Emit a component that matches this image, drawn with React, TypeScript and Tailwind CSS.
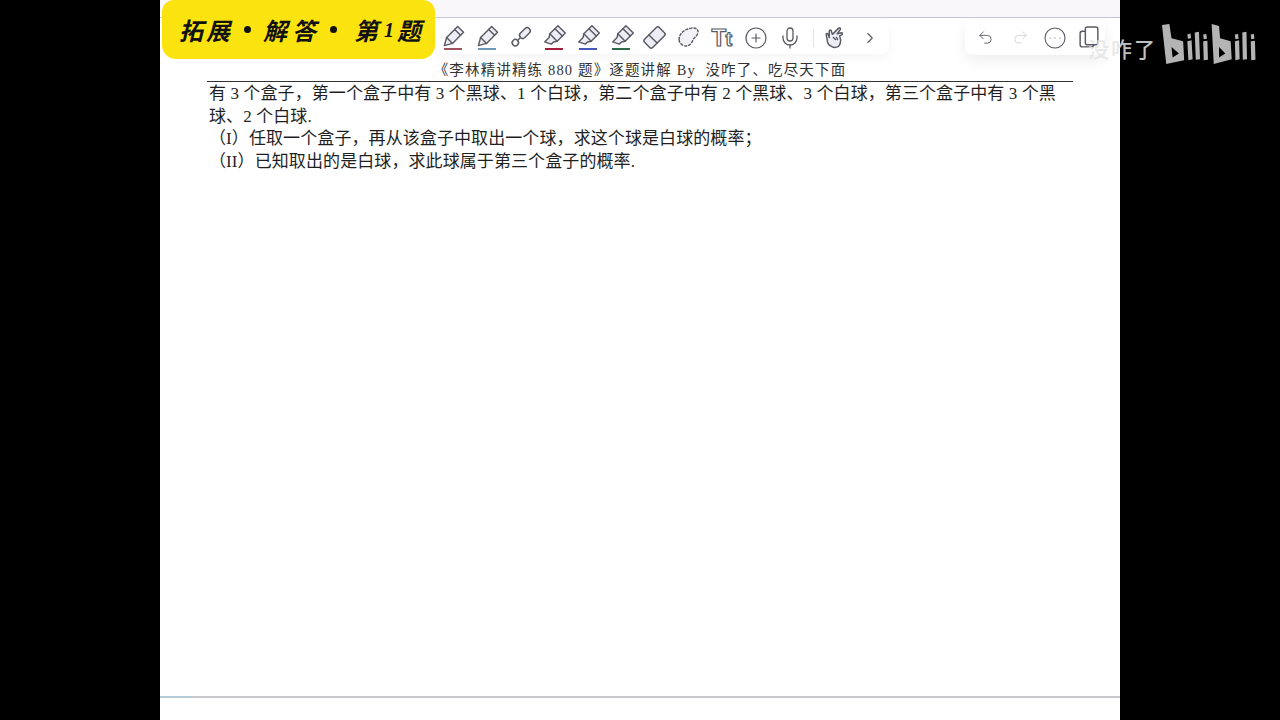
import { ChevronRight, CircleEllipsis, CirclePlus, Mic, Redo2, Undo2 } from "lucide-react";

const S = "#5a5a64";
const F = "#ededf5";

function Svg({ children }: { children: React.ReactNode }) {
  return (
    <svg width="25" height="25" viewBox="0 0 24 24" fill="none" stroke={S} strokeWidth="1.4" strokeLinejoin="round" strokeLinecap="round">
      {children}
    </svg>
  );
}

const Pencil = () => (
  <Svg>
    <g transform="rotate(45 12 12)">
      <path d="M8 1h8v15l-4 7-4-7z" fill={F} />
      <path d="M8 5h8M8 16h8" />
    </g>
  </Svg>
);
const Link = () => (
  <Svg>
    <g transform="rotate(45 12 12)">
      <rect x="9" y="0" width="6" height="12" rx="3" fill={F} />
      <path d="M12 12v4" />
      <circle cx="12" cy="19" r="3" />
    </g>
  </Svg>
);
const Marker = () => (
  <Svg>
    <g transform="rotate(45 12 12)">
      <path d="M7 1h10v11l-2 3v3l-6 3v-6l-2-3z" fill={F} />
      <path d="M7 5h10M7 12h10" />
    </g>
  </Svg>
);
const Eraser = () => (
  <Svg>
    <g transform="rotate(45 12 12)">
      <rect x="6.500" y="2" width="11" height="20" rx="2" fill={F} />
      <path d="M6.500 14h11" />
    </g>
  </Svg>
);
const Lasso = () => (
  <Svg>
    <path d="M3 14c0-6 5-10 12-11 4-.5 7 1 6 5-1 3-4 4-5 7-1 3-4 6-8 5-3-1-5-3-5-6z" fill="#f3f3f7" strokeDasharray="2 2" />
  </Svg>
);
const Tt = () => (
  <svg width="30" height="26" viewBox="0 0 30 26">
    <text x="4.500" y="21" fontFamily="'Liberation Sans', sans-serif" fontWeight="700" fontSize="24" fill="#fff" stroke={S} strokeWidth="1.2">T</text>
    <text x="18.500" y="21" fontFamily="'Liberation Sans', sans-serif" fontWeight="700" fontSize="20" fill="#fff" stroke={S} strokeWidth="1.2">t</text>
  </svg>
);
const HandIcon = () => (
  <Svg>
    <path d="M9 21c-3-1-5-4-5-7l-1-5c0-1 1.500-1 2 0l1 3 0-6c0-1.500 2-1.500 2 0l1 3 6-6c1-1 2.500.500 1.500 1.500l-3 4 4-1c1.500 0 1.500 1.500.500 2l-2 1 1 4c0 3-1 5-2 6-2 1-4 1.500-6 .5z" fill={F} />
    <path d="M10 12l2 2M13 12l1 2" />
  </Svg>
);
const Devices = () => (
  <Svg>
    <rect x="8" y="2" width="12" height="17" rx="2" />
    <path d="M8 6H5a2 2 0 0 0-2 2v11a2 2 0 0 0 2 2h9a2 2 0 0 0 2-2" />
  </Svg>
);

function Tool({ children, line }: { children: React.ReactNode; line?: string }) {
  return (
    <div className="relative flex h-full w-[33.7px] shrink-0 items-center justify-center">
      {children}
      {line ? <span className={`absolute left-[8px] top-[26.5px] h-[2px] w-[18px] ${line}`} /> : null}
    </div>
  );
}

function Logo() {
  return (
    <svg width="94" height="42" viewBox="0 0 89 44" preserveAspectRatio="none" fill="#b4b4b4" aria-label="bilibili">
      <path fillRule="evenodd" d="M0 1l7-1 2 15 11 3 1 20-17 4zM9 24l1 11 6-4z" />
      <path d="M24 18l4-1 1 20-4 1zM24 11l3-1 .5 5-3 .5zM31 9l4-1 1 29-4 .5zM39 18l4-.500.5 20-4 .5zM39 11l3-.5.5 5-3 .5z" />
      <path fillRule="evenodd" d="M47 0l7 2 1 13 10 3 1 19-17 5zM54 24v11l6-4z" />
      <path d="M69 18l4-1 .5 20-4 1zM69 11l3-.5.5 5-3 .5zM76 9l4-1 .5 29-4 .5zM84 18l4-.5.5 20-4 .5zM84 11l3-.5.5 5-3 .5z" />
    </svg>
  );
}

export default function App() {
  const serif = "font-['Liberation_Serif','Noto_Sans_CJK_SC',serif]";
  return (
    <div className="relative flex h-[720px] w-[1280px] justify-center overflow-hidden bg-black">
      <main className={`relative flex h-full w-[960px] flex-col bg-white text-[#222] ${serif}`}>
        <div className="h-[18px] shrink-0 border-b border-[#c8c8dc] bg-[#f9f7fa]" />
        <header className="mx-[47px] mt-[44px] h-[20px] shrink-0 border-b border-[#333] text-center text-[14.500px] leading-[16px] tracking-[1.15px] text-[#333]">
          《李林精讲精练 880 题》逐题讲解 By&nbsp; 没咋了、吃尽天下面
        </header>
        <section className="ml-[49px] mt-px flex-1 text-[17px] leading-[22.700px] tracking-[0.09px] text-[#1f1f1f]">
          <p>有 3 个盒子，第一个盒子中有 3 个黑球、1 个白球，第二个盒子中有 2 个黑球、3 个白球，第三个盒子中有 3 个黑</p>
          <p>球、2 个白球.</p>
          <p>（I）任取一个盒子，再从该盒子中取出一个球，求这个球是白球的概率；</p>
          <p>（II）已知取出的是白球，求此球属于第三个盒子的概率.</p>
        </section>
        <div className="mb-[22px] flex h-[2px] shrink-0 bg-[#c8c8cc]">
          <div className="h-full w-[32px] bg-[#b6cbd8]" />
        </div>

        <div className="absolute left-[2px] top-0 flex h-[59px] w-[273px] items-center rounded-b-[14px] rounded-t-[12px] bg-[#fbe30f] pl-[17px] font-['Noto_Sans_CJK_SC',sans-serif] text-[24px] font-bold italic leading-none text-[#111]">
          <span className="w-[27px]">拓</span>
          <span className="w-[27px]">展</span>
          <span className="ml-[11px] h-[7px] w-[7px] rounded-full bg-[#111]" />
          <span className="ml-[12px] w-[29px]">解</span>
          <span className="w-[27px]">答</span>
          <span className="ml-[11px] h-[7px] w-[7px] rounded-full bg-[#111]" />
          <span className="ml-[17px] w-[30px]">第</span>
          <span className="w-[13px] font-['Liberation_Serif',serif] text-[20px]">1</span>
          <span>题</span>
        </div>

        <nav className="absolute left-[276px] top-[21px] flex h-[33px] w-[453px] items-center rounded-lg bg-white shadow-[0_4px_10px_rgba(0,0,0,0.04)]">
          <Tool line="bg-[#a0525e]"><Pencil /></Tool>
          <Tool line="bg-[#6e97b8]"><Pencil /></Tool>
          <Tool><Link /></Tool>
          <Tool line="bg-[#a31f3c]"><Marker /></Tool>
          <Tool line="bg-[#4557b8]"><Marker /></Tool>
          <Tool line="bg-[#2f6b4a]"><Marker /></Tool>
          <Tool><Eraser /></Tool>
          <Tool><Lasso /></Tool>
          <Tool><Tt /></Tool>
          <Tool><CirclePlus size={24} strokeWidth={1.2} color={S} /></Tool>
          <Tool><Mic size={24} strokeWidth={1.3} color={S} /></Tool>
          <span className="ml-[6px] h-[18px] w-px bg-[#e2e2e6]" />
          <div className="ml-[5px]"><Tool><HandIcon /></Tool></div>
          <div className="ml-[1px]"><Tool><ChevronRight size={18} strokeWidth={1.5} color={S} /></Tool></div>
        </nav>

        <nav className="absolute left-[805px] top-[20px] flex h-[35px] w-[140px] items-center gap-px rounded-lg bg-white pl-[3.5px] shadow-[0_6px_14px_rgba(0,0,0,0.07)]">
          <Tool><Undo2 size={17} strokeWidth={1.3} color={S} /></Tool>
          <Tool><Redo2 size={17} strokeWidth={1.3} color="#d4d4d8" /></Tool>
          <Tool><CircleEllipsis size={24} strokeWidth={1.1} color={S} /></Tool>
          <Tool><Devices /></Tool>
        </nav>
      </main>

      <div className="absolute left-[1088px] top-[34px] font-['Noto_Sans_CJK_SC',sans-serif] text-[21px] font-medium leading-[28px] tracking-[2px] text-[#e4e4e4]/85">
        没咋了
      </div>
      <div className="absolute left-[1162px] top-[24px]">
        <Logo />
      </div>
    </div>
  );
}
